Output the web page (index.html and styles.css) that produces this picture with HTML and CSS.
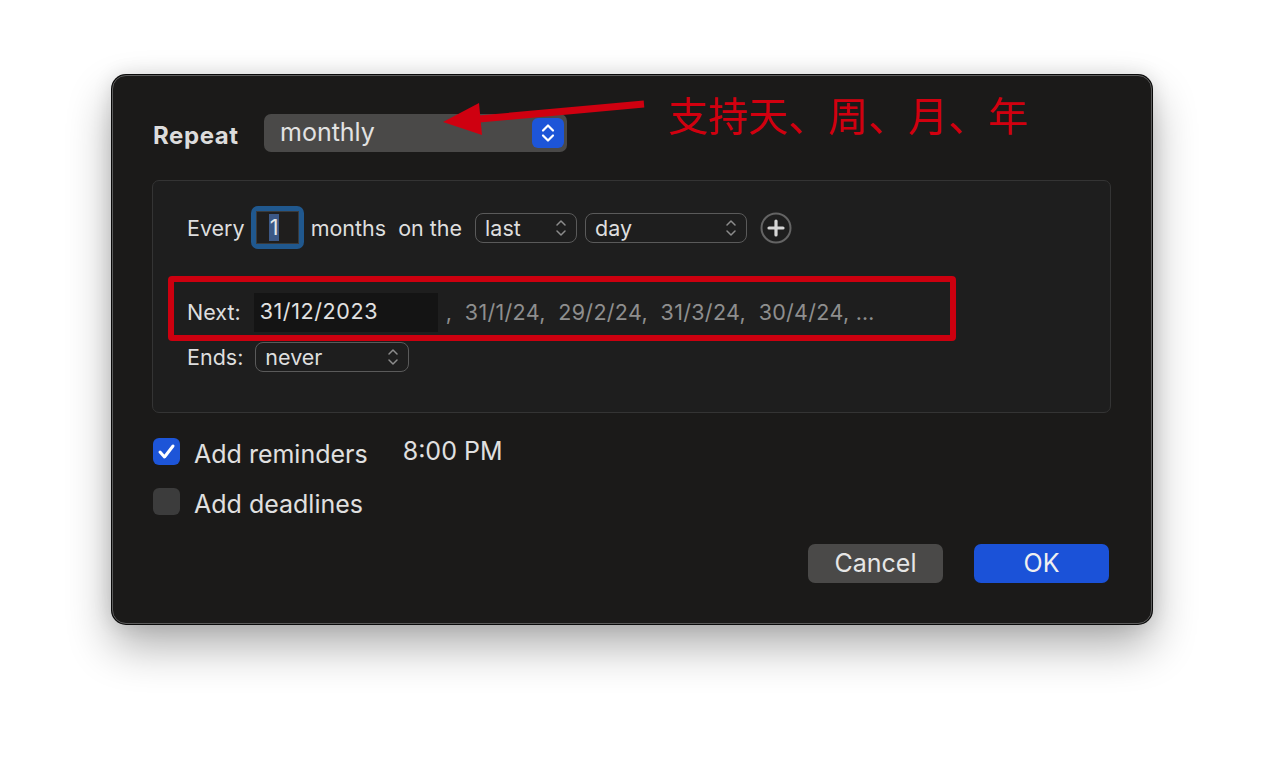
FILE: index.html
```html
<!DOCTYPE html>
<html>
<head>
<meta charset="utf-8">
<link rel="stylesheet" href="styles.css">
</head>
<body>
<div class="stage">
  <div class="window">
    <div class="repeat-row">
      <span class="repeat-label">Repeat</span>
      <div class="big-popup">
        <span>monthly</span>
        <span class="stepper">
          <svg width="18" height="22" viewBox="0 0 18 22"><path d="M4 8.5 L9 3.5 L14 8.5 M4 13.5 L9 18.5 L14 13.5" fill="none" stroke="#fff" stroke-width="2.2" stroke-linecap="round" stroke-linejoin="round"/></svg>
        </span>
      </div>
    </div>

    <div class="group">
      <div class="every-row">
        <span class="lbl">Every</span>
        <div class="num-field"><div class="num-inner"><span class="sel">1</span></div></div>
        <span class="lbl">months</span>
        <span class="lbl gap-on">on the</span>
        <div class="popup w-last"><span>last</span><svg class="chev" width="12" height="20" viewBox="0 0 12 20"><path d="M2 7 L6 3 L10 7 M2 13 L6 17 L10 13" fill="none" stroke="#8c8c8c" stroke-width="1.5" stroke-linecap="round" stroke-linejoin="round"/></svg></div>
        <div class="popup w-day"><span>day</span><svg class="chev" width="12" height="20" viewBox="0 0 12 20"><path d="M2 7 L6 3 L10 7 M2 13 L6 17 L10 13" fill="none" stroke="#8c8c8c" stroke-width="1.5" stroke-linecap="round" stroke-linejoin="round"/></svg></div>
        <div class="plus">
          <svg width="32" height="32" viewBox="0 0 32 32"><circle cx="16" cy="16" r="14.5" fill="none" stroke="#646464" stroke-width="2"/><path d="M16 9 V23 M9 16 H23" stroke="#d6d6d6" stroke-width="3.2" stroke-linecap="round"/></svg>
        </div>
      </div>

      <div class="next-row">
        <span class="lbl">Next:</span>
        <div class="date-field">31/12/2023</div>
        <span class="dates">,&nbsp; 31/1/24,&nbsp; 29/2/24,&nbsp; 31/3/24,&nbsp; 30/4/24, …</span>
      </div>

      <div class="ends-row">
        <span class="lbl">Ends:</span>
        <div class="popup w-never"><span>never</span><svg class="chev" width="12" height="20" viewBox="0 0 12 20"><path d="M2 7 L6 3 L10 7 M2 13 L6 17 L10 13" fill="none" stroke="#8c8c8c" stroke-width="1.5" stroke-linecap="round" stroke-linejoin="round"/></svg></div>
      </div>
    </div>

    <div class="check-row">
      <span class="check checked">
        <svg width="27" height="27" viewBox="0 0 27 27"><path d="M7 14 L11.5 19 L20 8" fill="none" stroke="#fff" stroke-width="3" stroke-linecap="round" stroke-linejoin="round"/></svg>
      </span>
      <span class="check-label">Add reminders</span>
      <span class="time">8:00 PM</span>
    </div>
    <div class="check-row second">
      <span class="check"></span>
      <span class="check-label">Add deadlines</span>
    </div>

    <div class="buttons">
      <div class="btn cancel">Cancel</div>
      <div class="btn ok">OK</div>
    </div>

    <div class="annot-box"></div>
    <svg class="annot-arrow" width="220" height="50" viewBox="0 0 220 50">
      <path d="M201 4 L36 19" stroke="#cf0010" stroke-width="7" stroke-linecap="butt"/>
      <path d="M0 22 L36 3 L39 35 Z" fill="#cf0010"/>
    </svg>
    <div class="annot-text">支持天、周、月、年</div>
  </div>
</div>
</body>
</html>
```
FILE: styles.css
```css
* { box-sizing: border-box; }
html, body { margin: 0; padding: 0; }
body {
  background: #ffffff;
  font-family: "Inter", "Liberation Sans", sans-serif;
  color: #dedede;
  width: 1264px;
  height: 772px;
  overflow: hidden;
}
.stage {
  padding: 75px 0 0 112px;
}
.window {
  position: relative;
  width: 1040px;
  height: 549px;
  background: #1b1a19;
  border-radius: 14px;
  border: 1px solid #5c5c5c;
  box-shadow: 0 0 0 1px #0a0a0a, 0 22px 45px rgba(0,0,0,0.32), 0 0 20px rgba(0,0,0,0.12);
  padding: 38px 40px 0 39px;
}
.repeat-row {
  display: flex;
  align-items: center;
  height: 38px;
}
.repeat-label {
  font-weight: 700;
  font-size: 24px;
  letter-spacing: 0.6px;
  color: #dcdcdc;
  width: 112px;
  padding-top: 4px;
  padding-left: 1px;
}
.big-popup {
  width: 303px;
  height: 38px;
  background: #4a4948;
  border-radius: 7px;
  display: flex;
  align-items: center;
  justify-content: space-between;
  padding: 0 3px 0 16px;
  font-size: 25px;
  color: #e2e2e2;
}
.big-popup > span:first-child { margin-top: -2px; }
.stepper {
  width: 32px;
  height: 30px;
  background: #1d55d8;
  border-radius: 6px;
  display: flex;
  align-items: center;
  justify-content: center;
}
.group {
  margin-top: 28px;
  width: 959px;
  height: 233px;
  background: #1e1e1e;
  border: 1px solid #343434;
  border-radius: 7px;
  padding: 25px 0 0 34px;
}
.every-row {
  display: flex;
  align-items: center;
  height: 43px;
}
.lbl {
  font-size: 21.5px;
  color: #dedede;
}
.num-field {
  margin: 0 7px 0 6px;
  width: 53px;
  height: 43px;
  border-radius: 7px;
  background: #20588e;
  padding: 5px;
}
.num-inner {
  width: 100%;
  height: 100%;
  background: #1f1e1d;
  border: 1px solid #3a3a3a;
  display: flex;
  align-items: center;
  padding-left: 12px;
}
.sel {
  background: #3c5886;
  font-size: 21.5px;
  line-height: 27px;
  padding: 0 1px;
  color: #e8e8e8;
}
.gap-on { margin-left: 12px; }
.popup {
  height: 30px;
  border: 1.5px solid #5a5a5a;
  border-radius: 8px;
  display: flex;
  align-items: center;
  justify-content: space-between;
  padding: 0 9px 0 9px;
  font-size: 21.5px;
  color: #dedede;
}
.w-last { width: 102px; margin-left: 13px; }
.w-day { width: 162px; margin-left: 8px; }
.w-never { width: 154px; margin-left: 12px; }
.plus { margin-left: 13px; display: flex; }
.next-row {
  display: flex;
  align-items: center;
  margin-top: 44px;
  height: 39px;
}
.next-row .lbl { margin-top: -2px; }
.date-field {
  margin-left: 13px;
  width: 184px;
  height: 39px;
  background: #141414;
  display: flex;
  align-items: center;
  padding-left: 6px;
  padding-bottom: 4px;
  font-size: 21.5px;
  letter-spacing: 0.6px;
  color: #e2e2e2;
}
.dates {
  margin-left: 8px;
  margin-top: -2px;
  font-size: 21.5px;
  letter-spacing: 0.3px;
  color: #8e8e8e;
}
.ends-row {
  display: flex;
  align-items: center;
  margin-top: 10px;
  height: 30px;
}
.ends-row .lbl { margin-top: -1px; }
.check-row {
  display: flex;
  align-items: center;
  margin-top: 24px;
  height: 28px;
  padding-left: 1px;
}
.check-row.second { margin-top: 22px; }
.check {
  width: 27px;
  height: 27px;
  border-radius: 6px;
  background: #3c3c3c;
  display: flex;
  flex-shrink: 0;
}
.check.checked { background: #1d55d8; }
.check-label {
  margin-left: 14px;
  font-size: 25px;
  color: #e0e0e0;
  padding-top: 5px;
}
.time {
  margin-left: 35px;
  font-size: 25px;
  color: #e0e0e0;
  margin-top: -1px;
}
.buttons {
  display: flex;
  justify-content: flex-end;
  gap: 31px;
  margin-top: 29px;
  padding-right: 2px;
}
.btn {
  width: 135px;
  height: 39px;
  border-radius: 7px;
  display: flex;
  align-items: center;
  justify-content: center;
  font-size: 25px;
  color: #e6e6e6;
  padding-bottom: 1px;
}
.cancel { background: #4a4948; }
.ok { background: #1b52d8; color: #f0f0f0; }
.annot-box {
  position: absolute;
  left: 55px;
  top: 200px;
  width: 788px;
  height: 65px;
  border: 6px solid #cc000f;
  border-radius: 4px;
}
.annot-arrow {
  position: absolute;
  left: 330px;
  top: 24px;
}
.annot-text {
  position: absolute;
  left: 555px;
  top: 10px;
  font-family: "Noto Sans CJK SC", sans-serif;
  font-size: 40px;
  color: #d1000f;
  line-height: 56px;
}
```
